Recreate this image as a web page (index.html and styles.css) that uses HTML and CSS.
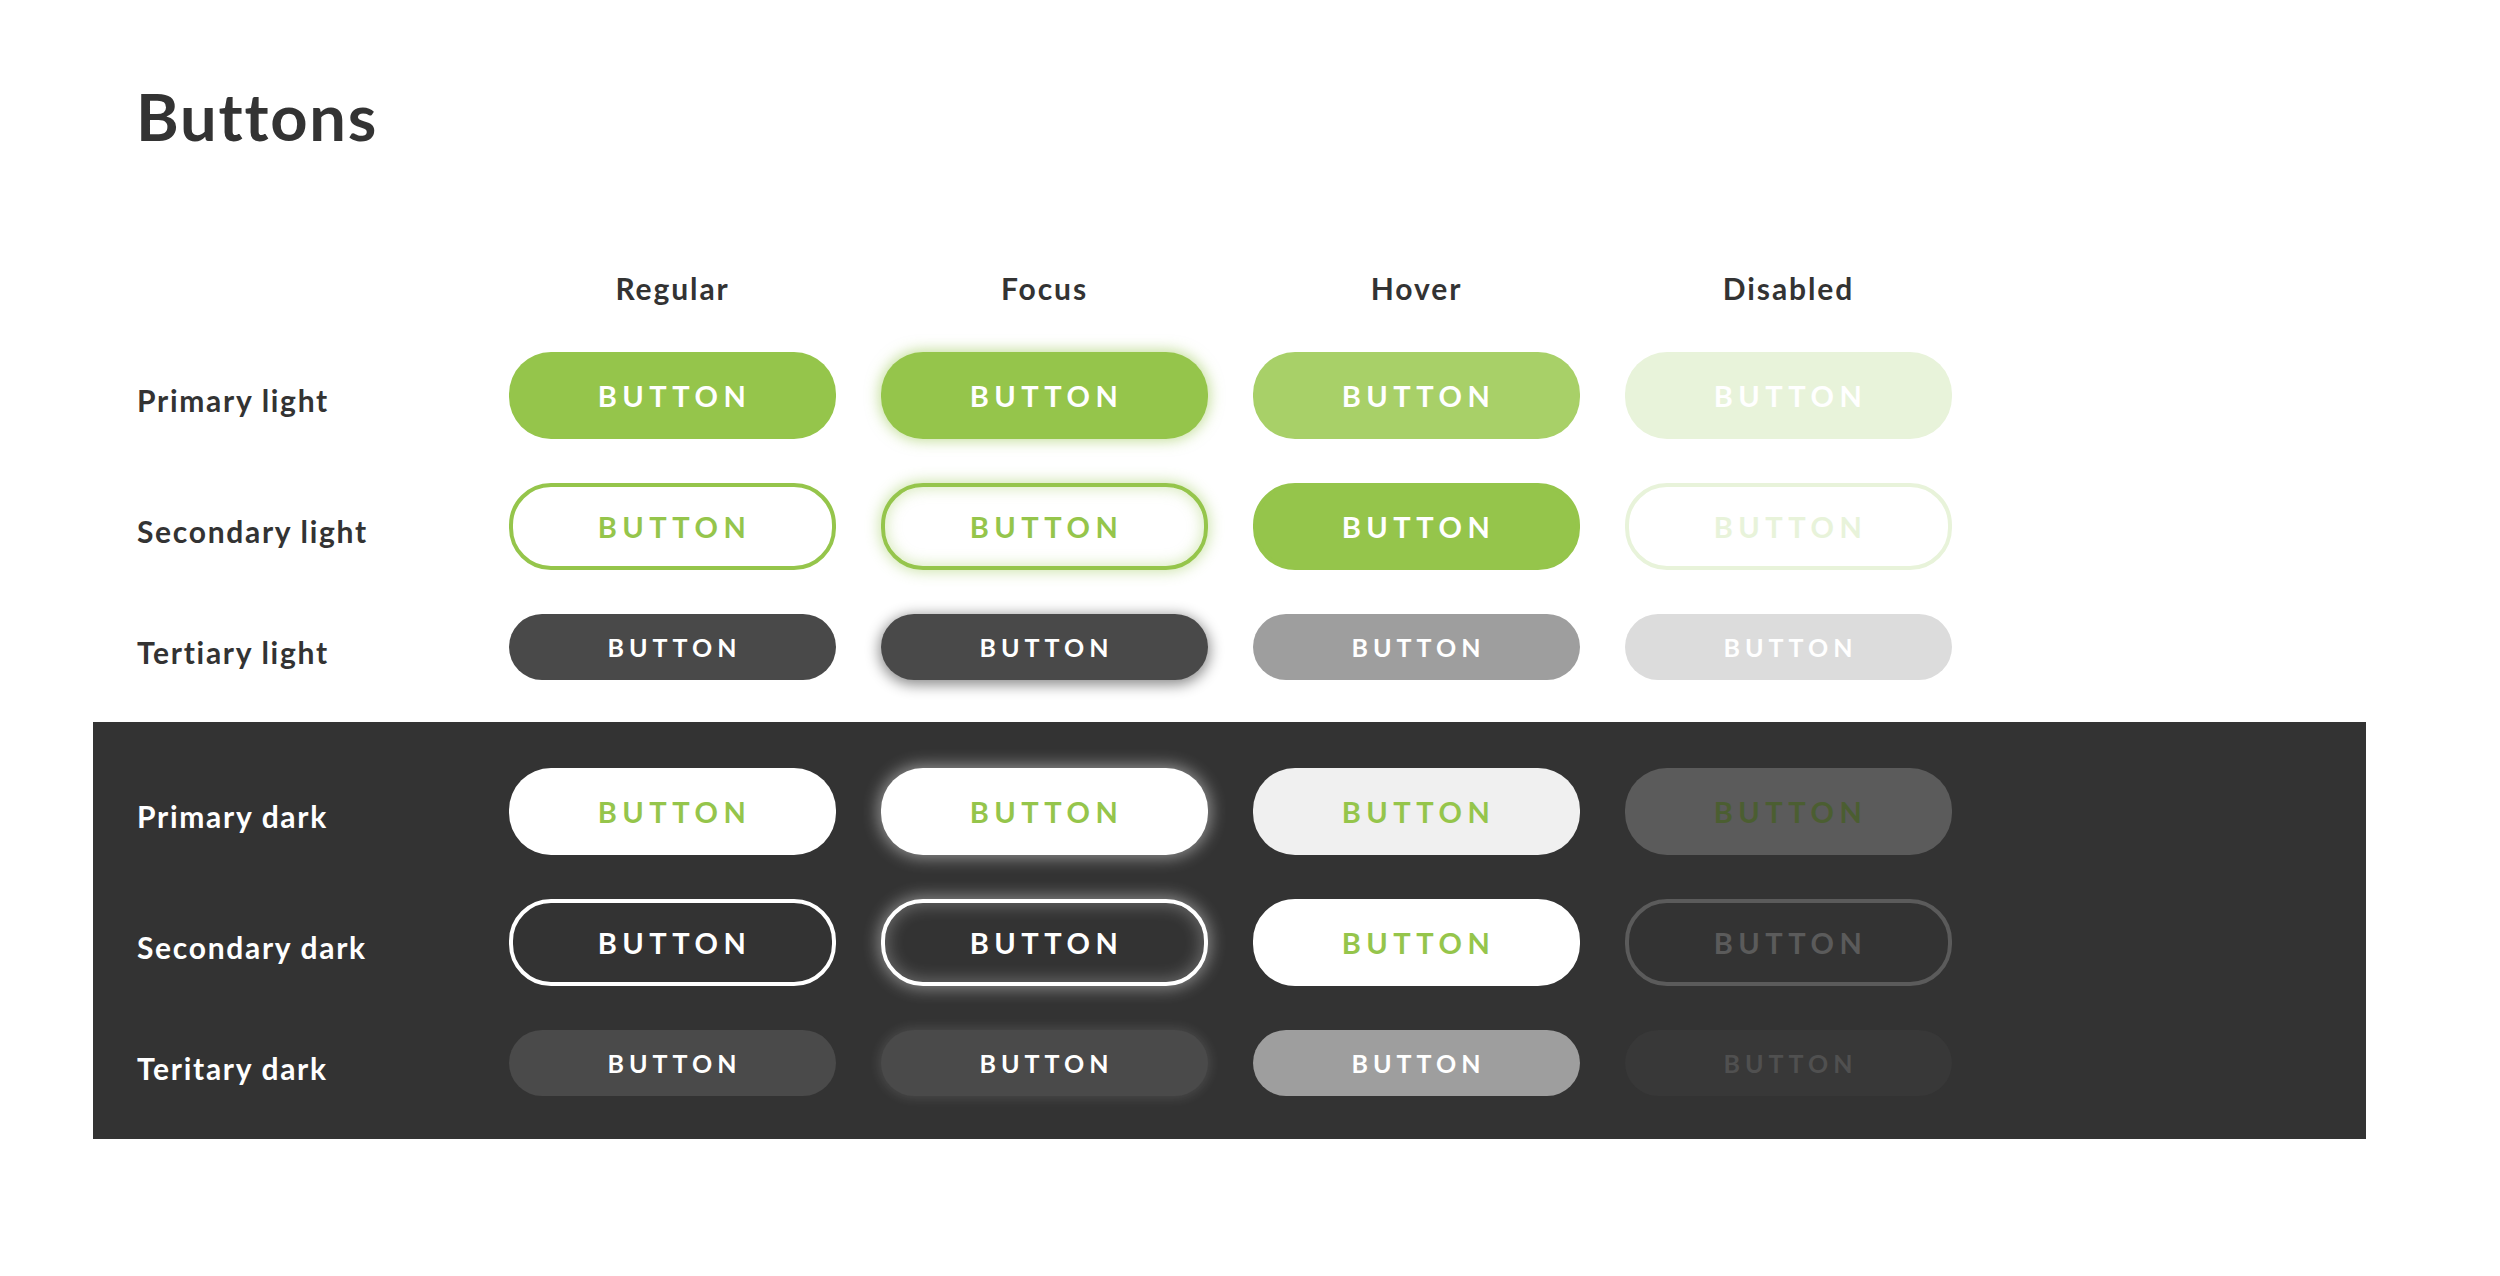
FILE: index.html
```html
<!DOCTYPE html>
<html lang="en">
<head>
<meta charset="utf-8">
<title>Buttons</title>
<link rel="stylesheet" href="styles.css">
</head>
<body>
<main class="page">
  <h1 class="title">Buttons</h1>

  <section class="matrix light">
    <div class="corner"></div>
    <div class="col-head">Regular</div>
    <div class="col-head">Focus</div>
    <div class="col-head">Hover</div>
    <div class="col-head">Disabled</div>

    <div class="row-label">Primary light</div>
    <div class="btn pl">BUTTON</div>
    <div class="btn pl focus">BUTTON</div>
    <div class="btn pl hover">BUTTON</div>
    <div class="btn pl disabled">BUTTON</div>

    <div class="row-label">Secondary light</div>
    <div class="btn sl">BUTTON</div>
    <div class="btn sl focus">BUTTON</div>
    <div class="btn sl hover">BUTTON</div>
    <div class="btn sl disabled">BUTTON</div>

    <div class="row-label">Tertiary light</div>
    <div class="btn tl small">BUTTON</div>
    <div class="btn tl small focus">BUTTON</div>
    <div class="btn tl small hover">BUTTON</div>
    <div class="btn tl small disabled">BUTTON</div>
  </section>

  <section class="matrix dark">
    <div class="row-label">Primary dark</div>
    <div class="btn pd">BUTTON</div>
    <div class="btn pd focus">BUTTON</div>
    <div class="btn pd hover">BUTTON</div>
    <div class="btn pd disabled">BUTTON</div>

    <div class="row-label">Secondary dark</div>
    <div class="btn sd">BUTTON</div>
    <div class="btn sd focus">BUTTON</div>
    <div class="btn sd hover">BUTTON</div>
    <div class="btn sd disabled">BUTTON</div>

    <div class="row-label">Teritary dark</div>
    <div class="btn td small">BUTTON</div>
    <div class="btn td small focus">BUTTON</div>
    <div class="btn td small hover">BUTTON</div>
    <div class="btn td small disabled">BUTTON</div>
  </section>
</main>
</body>
</html>
```

FILE: styles.css
```css
html, body {
  margin: 0;
  padding: 0;
  background: #ffffff;
}

body {
  font-family: Lato, "Open Sans", "Liberation Sans", sans-serif;
  color: #333333;
}

.page {
  padding-top: 84px;
  width: 2500px;
}

.title {
  margin: 0 0 0 136px;
  font-size: 65px;
  line-height: 65px;
  font-weight: 700;
  letter-spacing: 1.8px;
  color: #333333;
}

.matrix {
  display: grid;
  grid-template-columns: 327px repeat(4, 327px);
  column-gap: 45px;
  row-gap: 44px;
  align-items: center;
}

.light {
  margin-top: 121px;
  padding-left: 137px;
}

.col-head {
  font-size: 30px;
  line-height: 36px;
  font-weight: 700;
  letter-spacing: 1.9px;
  text-align: center;
  color: #333333;
  margin-bottom: 2px;
}

.corner {
  height: 36px;
}

.row-label {
  font-size: 30px;
  line-height: 36px;
  font-weight: 700;
  letter-spacing: 1.7px;
  padding-top: 9px;
  color: #333333;
}

.dark {
  margin: 42px 134px 0 93px;
  padding: 46px 0 43px 44px;
  background: #333333;
}

.dark .row-label {
  color: #ffffff;
}

/* Button base */
.btn {
  box-sizing: border-box;
  height: 87px;
  border-radius: 42px;
  display: flex;
  align-items: center;
  justify-content: center;
  font-size: 29px;
  font-weight: 700;
  letter-spacing: 5.5px;
  text-indent: 4px;
  color: #ffffff;
}

.btn.small {
  height: 66px;
  border-radius: 33px;
  font-size: 25px;
  letter-spacing: 5px;
  text-indent: 4px;
}

/* Primary light */
.pl { background: #95c54b; }
.pl.focus { box-shadow: 0 0 14px 2px rgba(149, 197, 75, 0.55); }
.pl.hover { background: #a8d068; }
.pl.disabled { background: #e8f3da; color: #ffffff; }

/* Secondary light */
.sl { border: 4px solid #95c54b; color: #95c54b; background: #ffffff; }
.sl.focus {
  box-shadow: 0 0 14px 2px rgba(149, 197, 75, 0.45), inset 0 0 14px 2px rgba(149, 197, 75, 0.35);
}
.sl.hover { background: #95c54b; color: #ffffff; }
.sl.disabled { border-color: #e8f3da; color: #e8f3da; }

/* Tertiary light */
.tl { background: #494949; }
.tl.focus { box-shadow: 0 3px 14px 2px rgba(0, 0, 0, 0.45); }
.tl.hover { background: #9e9e9e; }
.tl.disabled { background: #dcdcdc; }

/* Primary dark */
.pd { background: #ffffff; color: #95c54b; }
.pd.focus { box-shadow: 0 0 16px 3px rgba(255, 255, 255, 0.45); }
.pd.hover { background: #f0f0f0; }
.pd.disabled { background: #5b5b5b; color: #4b5e31; }

/* Secondary dark */
.sd { border: 4px solid #ffffff; color: #ffffff; background: #333333; }
.sd.focus {
  box-shadow: 0 0 16px 3px rgba(255, 255, 255, 0.4), inset 0 0 16px 3px rgba(255, 255, 255, 0.25);
}
.sd.hover { background: #ffffff; border-color: #ffffff; color: #95c54b; }
.sd.disabled { border-color: #5b5b5b; color: #5b5b5b; }

/* Tertiary dark */
.td { background: #4a4a4a; }
.td.focus { box-shadow: 0 0 12px 2px rgba(255, 255, 255, 0.12); }
.td.hover { background: #9e9e9e; }
.td.disabled { background: #383838; color: #505050; }
```
